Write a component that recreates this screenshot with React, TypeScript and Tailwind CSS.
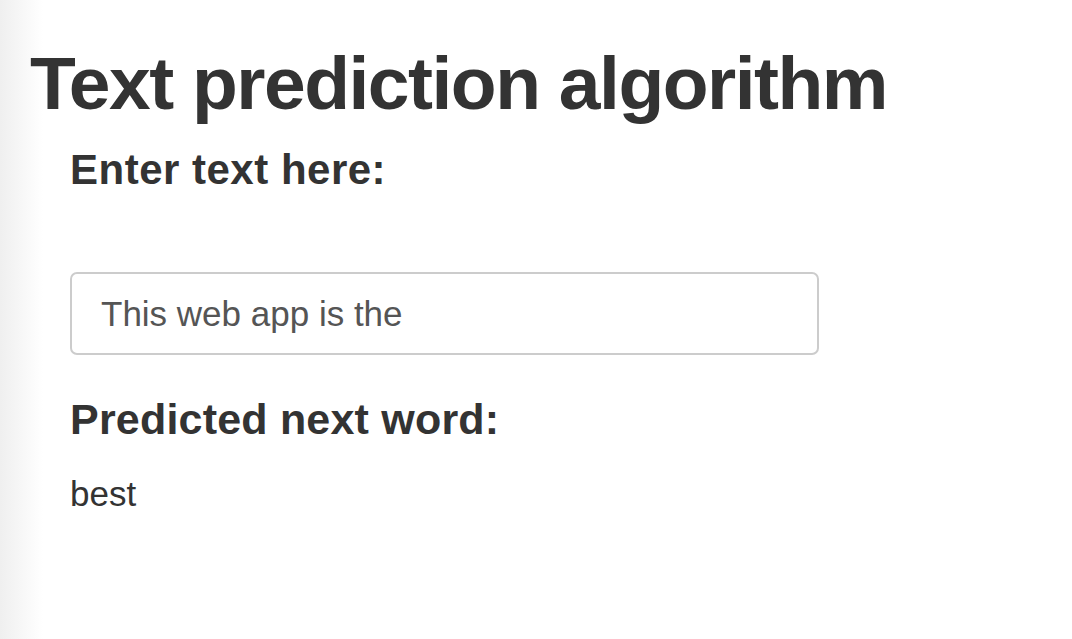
export default function App() {
  return (
    <div className="min-h-[639px] w-full bg-linear-to-r from-[#efefef] from-0% via-white via-[4%] to-white font-['Liberation_Sans',Arial,sans-serif] text-[#333]">
      <div className="pl-[30px] pt-[42px]">
        <h1 className="text-[75px] font-bold leading-[82px] tracking-[-1.5px]">
          Text prediction algorithm
        </h1>
        <div className="pl-[40px]">
          <label className="mt-[22px] block text-[42px] font-bold leading-[48px] tracking-[0.5px]">
            Enter text here:
          </label>
          <input
            className="mt-[78px] block h-[83px] w-[749px] rounded-[7px] border-2 border-[#ccc] px-[29px] text-[35px] text-[#555] outline-none"
            defaultValue="This web app is the"
          />
          <h3 className="mt-[39px] text-[43px] font-bold leading-[50px] tracking-[0.2px]">
            Predicted next word:
          </h3>
          <p className="mt-[30px] text-[35px] leading-[40px]">best</p>
        </div>
      </div>
    </div>
  );
}
